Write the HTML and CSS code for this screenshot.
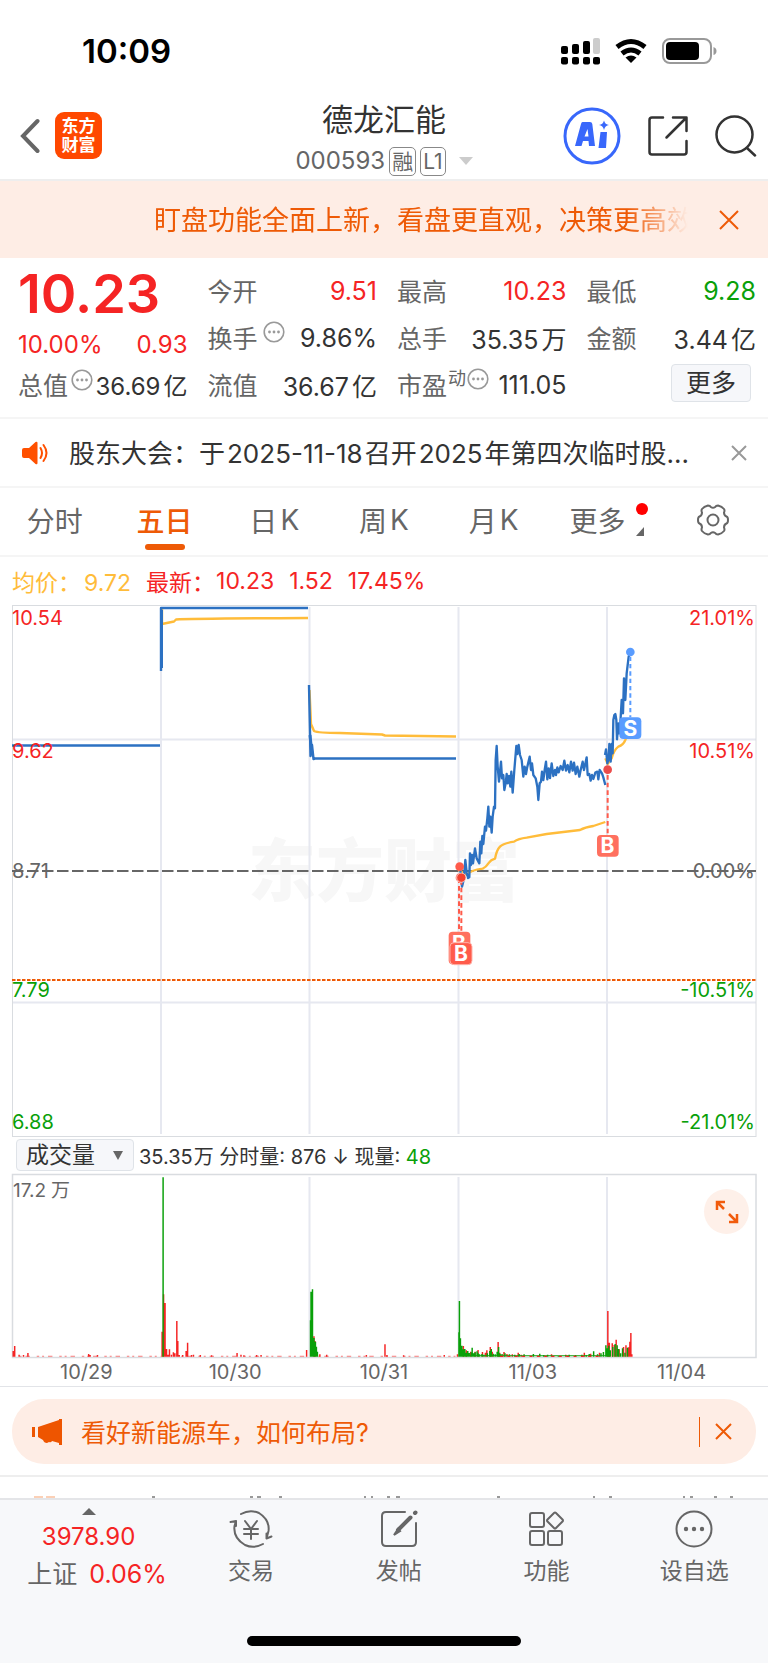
FILE: index.html
```html
<!DOCTYPE html>
<html lang="zh-CN">
<head>
<meta charset="utf-8">
<meta name="viewport" content="width=device-width, initial-scale=1">
<title>德龙汇能 000593</title>
<link rel="stylesheet" href="styles.css">
</head>
<body>
<div class="app">
  <div class="status">
    <span class="clock">10:09</span>
    <svg class="status-icons" width="156" height="28" viewBox="561 37 156 28" aria-hidden="true">
      <rect x="561" y="46" width="7" height="8" rx="2"/><rect x="572" y="44" width="7" height="10" rx="2"/><rect x="583" y="41" width="7" height="13" rx="2"/><rect x="593" y="38" width="7" height="16" rx="2" fill="#ccc"/>
      <rect x="561" y="57" width="7" height="7.500" rx="2"/><rect x="572" y="57" width="7" height="7.500" rx="2"/><rect x="583" y="57" width="7" height="7.500" rx="2"/><rect x="593" y="57" width="7" height="7.500" rx="2"/>
      <path d="M617 47q14-11 28 0M622 53.500q9-7 18 0" fill="none" stroke="#000" stroke-width="5"/>
      <path d="M631 63l-5.500-5.500q5.500-4 11 0z"/>
      <rect x="663" y="39" width="48" height="24" rx="7" fill="none" stroke="#999" stroke-width="2"/>
      <rect x="666" y="42" width="33" height="18" rx="4"/><path d="M713.500 47q3 1 3 4t-3 4z" fill="#999"/>
    </svg>
  </div>

  <header class="header">
    <div class="header-side">
      <button class="icon-btn back" aria-label="返回"><svg width="20" height="36" viewBox="0 0 20 36"><path d="M17.500 3L3 18l14.500 15" fill="none" stroke="#666" stroke-width="4" stroke-linecap="round"/></svg></button>
      <a class="logo" href="#home"><span>东方</span><span>财富</span></a>
    </div>
    <div class="heading">
      <h1>德龙汇能</h1>
      <div class="code"><span>000593</span><span class="tag">融</span><span class="tag">L1</span><svg width="14" height="8" viewBox="0 0 14 8"><path d="M0 0h14L7 8z" fill="#ccc"/></svg></div>
    </div>
    <div class="header-side header-actions">
      <button class="icon-btn" aria-label="AI"><svg width="58" height="58" viewBox="0 0 58 58"><circle cx="29" cy="29" r="27" fill="none" stroke="#3867fb" stroke-width="3"/><path d="M19.500 15h7.500q2 0 2.300 2L32 39h-6l-.5-5h-5.500l-1.500 5h-6.500l6-22q.5-2 1.500-2zM24.500 22l-3 7.500h4z" fill="#3867fb" fill-rule="evenodd"/><path d="M37.500 25h6.500l-1 16h-7.500zM41 13.500q1 4 5 4.500-4 .5-5 5-1-4.500-5-5 4-.5 5-4.500z" fill="#3867fb"/></svg></button>
      <button class="icon-btn" aria-label="分享"><svg width="40" height="40" viewBox="0 0 40 40" fill="none" stroke="#333" stroke-width="2.500" stroke-linecap="round" stroke-linejoin="round"><path d="M15 1.500H4q-2.500 0-2.500 2.500v32q0 2.500 2.500 2.500h32q2.500 0 2.500-2.500V25M25 1.500h13.500V15M38 2L18.500 21.500"/></svg></button>
      <button class="icon-btn" aria-label="搜索"><svg width="42" height="42" viewBox="0 0 42 42" fill="none" stroke="#333" stroke-width="2.500" stroke-linecap="round"><circle cx="19.500" cy="19.500" r="18"/><path d="M32 33l8 7.500"/></svg></button>
    </div>
  </header>

  <section class="banner">
    <p>盯盘功能全面上新，看盘更直观，决策更高效</p>
    <button class="icon-btn" aria-label="关闭"><svg width="20" height="20" viewBox="0 0 20 20"><path d="M1 1l18 18M19 1L1 19" stroke="#ee5a06" stroke-width="2"/></svg></button>
  </section>

  <section class="quote">
    <div class="quote-col">
      <strong class="price">10.23</strong>
      <div class="pair change up"><span>10.00%</span><span>0.93</span></div>
      <div class="pair small"><span class="label">总值</span><svg class="info" viewBox="0 0 22 22"><use href="#dots"/></svg><span>36.69<i class="thin"></i>亿</span></div>
    </div>
    <div class="quote-col">
      <div class="pair"><span class="label">今开</span><span class="up">9.51</span></div>
      <div class="pair"><span class="label with-info">换手<svg class="info" viewBox="0 0 22 22"><use href="#dots"/></svg></span><span>9.86%</span></div>
      <div class="pair"><span class="label">流值</span><span>36.67<i class="thin"></i>亿</span></div>
    </div>
    <div class="quote-col">
      <div class="pair"><span class="label">最高</span><span class="up">10.23</span></div>
      <div class="pair"><span class="label">总手</span><span>35.35<i class="thin"></i>万</span></div>
      <div class="pair"><span class="label with-sup">市盈<small>动</small><svg class="info" viewBox="0 0 22 22"><use href="#dots"/></svg></span><span>111.05</span></div>
    </div>
    <div class="quote-col">
      <div class="pair"><span class="label">最低</span><span class="down">9.28</span></div>
      <div class="pair"><span class="label">金额</span><span>3.44<i class="thin"></i>亿</span></div>
      <button class="more">更多</button>
    </div>
  </section>

  <section class="notice">
    <svg width="26" height="24" viewBox="0 0 26 24"><path d="M2 7h5l6.500-6q2-1 2 1v20q0 2-2 1L7 17H2q-2 0-2-2V9q0-2 2-2z" fill="#ff5000"/><path d="M18.500 7q3 5 0 10M21.500 4q6 8 0 16" fill="none" stroke="#ff5000" stroke-width="2" stroke-linecap="round"/></svg>
    <p>股东大会：于<i class="thin"></i>2025-11-18<i class="thin"></i>召开<i class="thin"></i>2025<i class="thin"></i>年第四次临时股...</p>
    <button class="icon-btn" aria-label="关闭"><svg width="16" height="16" viewBox="0 0 16 16"><path d="M1 1l14 14M15 1L1 15" stroke="#999" stroke-width="2"/></svg></button>
  </section>

  <nav class="tabs">
    <button>分时</button>
    <button class="active">五日</button>
    <button>日<i class="thin"></i>K</button>
    <button>周<i class="thin"></i>K</button>
    <button>月<i class="thin"></i>K</button>
    <button class="tab-more">更多<svg width="14" height="34" viewBox="0 0 14 34"><circle cx="7" cy="6" r="6" fill="#f00"/><path d="M9 24v9H1z" fill="#666"/></svg></button>
    <button aria-label="设置"><svg width="34" height="34" viewBox="0 0 34 34" fill="none" stroke="#666" stroke-width="2" stroke-linejoin="round"><path d="M12 2.500q2 0 2.800 1.500 2.200 1.500 4.400 0Q20 2.500 22 2.500q4 1 6 3.500 1 1.500 0 3.500 0 3 2.500 4 1.500.5 1.500 3.500t-1.500 3.500q-2.500 1-2.500 4 1 2 0 3.500-2 2.500-6 3.500-2 0-2.800-1.500-2.200-1.500-4.400 0Q14 31.500 12 31.500q-4-1-6-3.500-1-1.500 0-3.500 0-3-2.500-4Q2 20 2 17t1.500-3.500Q6 12.500 6 9.500 5 7.500 6 6q2-2.500 6-3.500z"/><circle cx="17" cy="17" r="5.500"/></svg></button>
  </nav>

  <section class="chart">
    <div class="legend"><span class="avg">均价：<i class="thin"></i>9.72</span><span>最新：</span><span>10.23</span><span>1.52</span><span>17.45%</span></div>
    <svg class="price-chart" viewBox="12 605 744 532" role="img" aria-label="五日走势">
      <text x="248" y="896" class="watermark">东方财富</text>
      <path d="M161 607V1134M309.500 607V1134M458.500 607V1134M607 607V1134M12 739.500H756M12 1002.500H756" stroke="#e6e8f0" stroke-width="2" fill="none"/>
      <rect x="12.500" y="605.500" width="743.500" height="531" fill="none" stroke="#d9dce0"/>
      <path d="M12 871H756" stroke="#666" stroke-width="2" stroke-dasharray="11.500 3.500"/>
      <path d="M12 980H756" stroke="#ee5a06" stroke-width="2" stroke-dasharray="3.500 1.500"/>
      <g fill="none" stroke-width="2.400" stroke-linejoin="round">
        <path d="M162 608V624L174 621.500 176 619.500Q190 618.500 308 618M309.500 690L311 724 314 731Q318 733 340 733L382 734.500 385 735.500 456 736.500" stroke="#ffbc3a"/>
        <path d="M12 745.500H160M161 671V608H308M309 685L310.500 756 312 745 313.500 759 315 758.500H456" stroke="#2c71c2"/>
        <path d="M161.500 668V610M310 735l2 20" stroke="#2c71c2" stroke-width="3"/>
      </g>
      <g transform="translate(440 620) scale(.33333)" fill="none" stroke-width="7" stroke-linejoin="round">
        <path d="M56 750L64 755 80 765Q92 750 128 746 138 742 147 728 152 720 165 716 170 690 180 680 190 670 222 665 235 656 260 653L320 642 420 630Q435 622 460 618L496 606M496 415L503 432 515 415Q522 390 535 380 550 375 556 360L571 318" stroke="#ffbc3a"/>
        <path d="M55 750L60 740 66 800 71 780 76 720 80 758 84 774 88 772 90 700 93 735 96 705 99 730 105 685 110 715 118 730 121 665 124 700 127 648 130 672 135 620 138 632 142 595 145 560 148 620 151 590 155 638 158 590 162 560 165 565 167 420 170 378 173 440 177 485 183 425 186 475 190 465 193 510 197 490 200 462 203 490 207 468 211 500 214 455 218 518 223 450 229 378 232 402 236 375 240 405 245 420 250 470 254 440 258 462 262 440 269 410 273 450 276 430 280 465 287 475 292 500 295 540 299 490 303 485 306 455 310 480 314 450 318 425 322 478 326 445 330 474 335 430 340 468 345 450 348 465 352 442 356 457 362 438 368 450 373 422 378 452 383 435 388 457 393 425 398 452 402 428 407 462 412 440 418 470 422 450 428 425 432 450 440 412 443 465 448 462 452 482 456 465 460 477 466 458 472 455 475 478 479 450 486 460 490 472 496 495M495 405L498 388 502 430 506 415 508 372 512 425 515 372 518 400 520 300 523 285 526 282 529 300 531 358 535 310 538 340 541 310 545 240 549 280 552 175 556 240 560 160 566 110 571 97" stroke="#2c71c2"/>
        <g stroke="#ff5b4b" stroke-width="6" stroke-dasharray="14 9"><path d="M57 775V940M64 780V970M503 465V645"/></g>
        <path d="M571 110V292" stroke="#599cff" stroke-width="6" stroke-dasharray="13 9"/>
        <g stroke="none" fill="#ff5b4b"><circle cx="59" cy="740" r="13"/><circle cx="60" cy="773" r="13"/><circle cx="64" cy="773" r="14" fill="#f4412f" stroke="#fff" stroke-width="2"/><circle cx="503" cy="449" r="13" fill="#eb4c4b"/><rect x="26" y="935" width="65" height="98" rx="12" fill="#ff705f"/></g>
      </g>
      <text x="459" y="951" class="mark" text-anchor="middle">B</text>
      <g transform="translate(440 620) scale(.33333)"><rect x="30" y="968" width="66" height="66" rx="12" fill="#ff5b4b" stroke="#ffb4ab" stroke-width="3"/><rect x="471" y="645" width="65" height="65" rx="12" fill="#ff705f"/><circle cx="571" cy="96" r="13" fill="#599cff"/><rect x="538" y="292" width="66" height="65" rx="12" fill="#599cff"/></g>
      <g class="mark" text-anchor="middle"><text x="461" y="961">B</text><text x="607.500" y="853">B</text><text x="630.500" y="736">S</text></g>
      <g class="axis"><text x="12" y="625" class="up">10.54</text><text x="12" y="758" class="up">9.62</text><text x="12" y="878">8.71</text><text x="12" y="997" class="down">7.79</text><text x="12" y="1129" class="down">6.88</text></g>
      <g class="axis" text-anchor="end"><text x="755" y="625" class="up">21.01%</text><text x="755" y="758" class="up">10.51%</text><text x="755" y="878">0.00%</text><text x="755" y="997" class="down">-10.51%</text><text x="755" y="1129" class="down">-21.01%</text></g>
    </svg>

    <div class="volume-bar">
      <label class="picker"><select aria-label="指标"><option>成交量</option></select><svg width="10" height="9" viewBox="0 0 10 9"><path d="M0 0h10L5 9z" fill="#666"/></svg></label>
      <span>35.35<i class="thin"></i>万 分时量: 876 ↓ 现量: <span class="down">48</span></span>
    </div>

    <div class="volume">
      <svg class="volume-chart" viewBox="12 1174 744 184" role="img" aria-label="成交量">
        <rect x="12.500" y="1174.500" width="743.500" height="183" fill="none" stroke="#d9dce0" stroke-width="1.500"/>
        <path d="M309.500 1177V1357M458.500 1177V1357M607 1177V1357" stroke="#e6e8f0" stroke-width="2"/>
        <text x="13" y="1197" class="scale">17.2</text><text x="51" y="1197" class="scale">万</text>
        <g transform="translate(0 1165) scale(.4898 .3333)" fill="none" stroke-width="3">
          <path d="M27 575V558M30 575V543M39 575v-6M48 575v-5M57 575V564M181 575V567M184 575v-5M199 575v-5M331 575V500M334 575V388M337 575V414M340 575V552M343 575v-6M346 575V553M350 575v-6M354 575V562M357 575V565M361 575V468M363 575V528M366 575v-5M373 575v-5M380 575V558M383 575V533M391 575v-5M395 575v-6M409 575v-5M432 575v-4M484 575V564M492 575v-6M498 575v-4M524 575v-5M533 575v-5M626 575V555M641 575V514M643 575V528M653 575v-7M667 575v-6M748 575v-5M786 575V538M790 575v-5M824 575v-4M907 575v-5M934 575v-7M946 575V543M952 575V556M961 575V560M970 575V560M976 575V555M985 575V561M991 575V563M994 575V556M1001 575V546M1005 575V560M1017 575V531M1020 575V563M1029 575V561M1035 575V567M1046 575V568M1058 575V563M1064 575V569M1126 575V568M1155 575V569M1193 575V563M1206 575V566M1224 575V563M1241 575V438M1244 575V533M1250 575V535M1254 575V540M1258 575V524M1264 575V553M1273 575V546M1278 575V541M1283 575V547M1286 575V530M1288 575V504M1290 575V568" stroke="#f52424"/>
          <path d="M40 574H330M370 574H625M650 574H935" stroke="#f52424" stroke-width="3" stroke-dasharray="4 8 9 14 5 6" opacity=".6"/>
          <path d="M333 575V37M634 575V466M635 575V380M638 575V373M641 575V519M644 575V530M646 575V545M648 575V560M937 575V502M938 575V408M940 575V520M943 575V542M946 575V553M949 575V552M952 575V563M955 575V558M958 575V564M962 575V562M964 575V548M967 575V565M970 575V562M974 575V559M976 575V565M979 575V568M984 575V567M988 575V569M995 575V565M1000 575V558M1003 575V552M1007 575V566M1011 575V568M1015 575V560M1018 575V546M1021 575V566M1025 575V567M1031 575V565M1040 575V568M1051 575V569M1060 575V567M1070 575V568M1089 575V567M1102 575V566M1110 575V570M1118 575V569M1129 575V571M1140 575V571M1162 575V569M1175 575V570M1188 575V569M1197 575V570M1203 575V567M1212 575V559M1220 575V568M1227 575V565M1232 575V561M1237 575V541M1240 575V550M1243 575V542M1246 575V556M1251 575V546M1256 575V537M1260 575V541M1263 575V552M1267 575V565M1271 575V550M1276 575V563M1281 575V548M940 572H1240" stroke="#09a009"/>
          <path d="M1021 574H1230" stroke="#f52424" stroke-dasharray="6 9" stroke-width="4"/>
        </g>
      </svg>
      <button class="expand" aria-label="展开"><svg width="24" height="24" viewBox="0 0 24 24" fill="none" stroke="#f15b0c" stroke-width="2.500"><path d="M2 10V2h8M2.500 2.500L9 9M22 14v8h-8M21.500 21.500L14 14"/></svg></button>
    </div>
    <div class="dates"><span>10/29</span><span>10/30</span><span>10/31</span><span>11/03</span><span>11/04</span></div>
  </section>

  <section class="promo">
    <a class="promo-pill" href="#ask">
      <svg width="30" height="28" viewBox="0 0 30 28" fill="#ee5500"><path d="M0 9h3v10H0zM6 9L27 2V1h3v26h-3v-2l-7-2q-1 2-3 1l-2 1q-3 0-4-3l-5-3z"/></svg>
      <span>看好新能源车，如何布局?</span>
    </a>
    <button class="icon-btn promo-close" aria-label="关闭"><svg width="17" height="17" viewBox="0 0 17 17"><path d="M1 1l15 15M16 1L1 16" stroke="#ee5a06" stroke-width="2"/></svg></button>
  </section>

  <div class="peek">
    <svg viewBox="0 0 768 2" aria-hidden="true"><path d="M34 1h9M46 1h9" stroke="#fbd0b6" stroke-width="2"/><path d="M152 1h3M250 1h3M257 1h4M279 1h3M364 1h2M371 1h2M387 1h3M396 1h4M497 1h3M593 1h2M609 1h3M683 1h2M690 1h3M714 1h3M730 1h3" stroke="#999" stroke-width="2"/></svg>
  </div>

  <footer class="dock">
    <nav class="dock-items">
      <a class="index" href="#index">
        <svg width="14" height="7" viewBox="0 0 14 7"><path d="M0 7h14L7 0z" fill="#666"/></svg>
        <span class="up">3978.90</span>
        <span class="index-row"><span>上证</span><span class="up">0.06%</span></span>
      </a>
      <a href="#trade"><svg width="44" height="40" viewBox="0 0 44 40" fill="none" stroke="#666" stroke-width="2" stroke-linecap="round" stroke-linejoin="round"><path d="M12 5q9-5 18-1 11 7 9.500 18l-2 7.500M34 35q-9 5-18 1Q4 29 5.500 17L7 12M1.500 13L7 12v5M37.500 29.500v-5M37.500 29.500l5-2M16 12l6 8 6-8M22 20v10M15 20h14M15 25h14"/></svg><span>交易</span></a>
      <a href="#post"><svg width="40" height="40" viewBox="0 0 40 40" fill="none" stroke="#666" stroke-width="2" stroke-linecap="round"><path d="M26 3H7Q3 3 3 7v26q0 4 4 4h26q4 0 4-4V14"/><path d="M19 21L31.500 8.500M36 4l.5-.5" stroke-width="4"/><path d="M15 26l4-6 2 2z" fill="#666"/></svg><span>发帖</span></a>
      <a href="#features"><svg width="40" height="40" viewBox="0 0 40 40" fill="none" stroke="#666" stroke-width="2" stroke-linejoin="round"><rect x="4" y="4" width="14" height="14" rx="2"/><rect x="4" y="22" width="14" height="14" rx="2"/><rect x="22" y="22" width="14" height="14" rx="2"/><path d="M28 4q1-1 2 0l6.500 6.500q1 1 0 2L30 19q-1 1-2 0l-6.500-6.500q-1-1 0-2z"/></svg><span>功能</span></a>
      <a href="#watch"><svg width="40" height="40" viewBox="0 0 40 40"><circle cx="20" cy="20" r="17.500" fill="none" stroke="#666" stroke-width="2"/><g fill="#666"><circle cx="12" cy="20" r="2.200"/><circle cx="20" cy="20" r="2.200"/><circle cx="28" cy="20" r="2.200"/></g></svg><span>设自选</span></a>
    </nav>
    <div class="home-indicator"></div>
  </footer>
</div>
<svg width="0" height="0" class="defs"><symbol id="dots" viewBox="0 0 22 22"><circle cx="11" cy="11" r="9.800" fill="none" stroke="#999" stroke-width="1.600"/><circle cx="6.500" cy="11" r="1.400" fill="#999"/><circle cx="11" cy="11" r="1.400" fill="#999"/><circle cx="15.500" cy="11" r="1.400" fill="#999"/></symbol></svg>
</body>
</html>
```
FILE: styles.css
```css
* { box-sizing: border-box; }
body {
  margin: 0;
  background: #fff;
  color: #333;
  font-family: Inter, "Noto Sans CJK SC", sans-serif;
  font-size: 25px;
}
h1, p { margin: 0; font-weight: 400; }
a { color: inherit; text-decoration: none; }
button { border: 0; padding: 0; background: none; color: inherit; font: inherit; }
svg { display: block; flex: none; }
.defs { position: absolute; top: 0; }
.up { color: #f52424; fill: #f52424; }
.down { color: #09a009; fill: #09a009; }
.thin { display: inline-block; width: 3px; }
.icon-btn { display: flex; }

.status {
  display: flex;
  align-items: center;
  justify-content: space-between;
  height: 92px;
  padding: 10px 51px 0 82px;
}
.clock { color: #000; font-size: 33px; font-weight: 600; }

.header {
  display: grid;
  grid-template-columns: 1fr auto 1fr;
  align-items: center;
  height: 89px;
  padding: 0 11px;
  border-bottom: 2px solid #eee;
}
.header-side { display: flex; align-items: center; gap: 15px; }
.header-actions { justify-content: flex-end; gap: 27px; }
.back { padding-left: 9px; }
.logo {
  display: flex;
  flex-direction: column;
  justify-content: center;
  align-items: center;
  width: 47px;
  height: 47px;
  border-radius: 9px;
  background: #ff4800;
  color: #fff;
  font-size: 17px;
  font-weight: 700;
  line-height: 19px;
}
.heading { padding-top: 4px; text-align: center; }
.heading h1 { margin-bottom: 3px; font-size: 31px; line-height: 44px; }
.code {
  display: flex;
  align-items: center;
  gap: 4px;
  color: #666;
  font-size: 24px;
  line-height: 32px;
}
.code svg { margin-left: 9px; }
.code .tag {
  padding: 0 2px;
  border: 1px solid #888;
  border-radius: 5px;
  font-size: 21px;
  line-height: 27px;
}

.banner {
  display: flex;
  align-items: center;
  justify-content: space-between;
  height: 77px;
  padding: 0 29px 0 154px;
  background: #feede5;
  color: #ee5a06;
  font-size: 27px;
}
.banner p {
  flex: 1;
  overflow: hidden;
  margin-right: 31px;
  padding-bottom: 2px;
  white-space: nowrap;
  -webkit-mask-image: linear-gradient(to left, transparent, #000 60px);
  mask-image: linear-gradient(to left, transparent, #000 60px);
}

.quote {
  display: grid;
  grid-template-columns: repeat(4, 1fr);
  gap: 20px;
  padding: 9px 12px 9px 18px;
  border-bottom: 2px solid #f5f5f5;
  white-space: nowrap;
}
.pair {
  display: flex;
  align-items: center;
  justify-content: space-between;
  height: 47px;
}
.label { padding-bottom: 2px; color: #666; }
.change, .small { font-size: 24px; }
.small .label { font-size: 25px; }
.price {
  display: block;
  height: 54px;
  color: #f52424;
  font-size: 54px;
  font-weight: 600;
  line-height: 54px;
}
.change { height: 40px; align-items: flex-end; line-height: 32px; }
.info { width: 22px; height: 22px; margin-bottom: 10px; }
.with-info, .with-sup { display: flex; align-items: center; gap: 5px; }
.with-sup { gap: 1px; }
.with-sup small { margin-bottom: 14px; font-size: 18px; }
.more {
  display: block;
  width: 80px;
  height: 38px;
  margin: 3px 5px 0 auto;
  border: 1px solid #dfe3e8;
  border-radius: 4px;
  background: #f6f7fa;
  line-height: 34px;
}

.notice {
  display: flex;
  align-items: center;
  height: 69px;
  padding: 0 21px 0 22px;
  border-bottom: 2px solid #f5f5f5;
  font-size: 26px;
}
.notice p { flex: 1; margin-left: 21px; padding-bottom: 3px; overflow: hidden; white-space: nowrap; }
.notice .thin { width: 2px; }

.tabs {
  display: grid;
  grid-template-columns: repeat(7, 1fr);
  height: 69px;
  border-bottom: 2px solid #f5f5f5;
  color: #666;
  font-size: 28px;
}
.tabs button { display: flex; align-items: center; justify-content: center; position: relative; padding-bottom: 3px; }
.tabs .active { color: #ee5a06; font-weight: 500; }
.tabs .active::after {
  content: "";
  position: absolute;
  bottom: 5px;
  width: 40px;
  height: 6px;
  border-radius: 3px;
  background: #ee5a06;
}
.tabs .tab-more { gap: 10px; padding-left: 12px; }

.chart { padding: 0 12px; border-bottom: 1px solid #e2e4e8; }
.legend {
  display: flex;
  align-items: center;
  gap: 15px;
  height: 48px;
  color: #f52424;
  font-size: 23px;
}
.legend .avg { color: #ffbc3a; }
.legend span:nth-child(2) { margin-right: -14px; }
.price-chart, .volume-chart { width: 100%; height: auto; overflow: visible; }
.watermark { fill: #f7f7f7; font-size: 68px; font-weight: 900; }
.axis { fill: #666; font-size: 20px; }
.scale { fill: #666; font-size: 19px; }
.mark { fill: #fff; font-size: 21px; font-weight: 700; }

.volume-bar {
  display: flex;
  align-items: center;
  gap: 5px;
  height: 37px;
  padding: 0 0 1px 4px;
  font-size: 20px;
}
.volume-bar .thin { width: 1px; }
.picker {
  display: flex;
  align-items: center;
  width: 118px;
  height: 32px;
  padding: 0 10px 0 9px;
  border: 1px solid #dfe3e8;
  border-radius: 4px;
  background: #f6f7fa;
}
.picker select {
  flex: 1;
  min-width: 0;
  padding: 0;
  border: 0;
  appearance: none;
  background: none;
  color: #333;
  font: inherit;
  font-size: 23px;
  line-height: 28px;
}
.volume { position: relative; }
.expand {
  display: flex;
  align-items: center;
  justify-content: center;
  position: absolute;
  top: 15px;
  right: 7px;
  width: 45px;
  height: 45px;
  border-radius: 50%;
  background: #fef0e9;
}
.dates {
  display: grid;
  grid-template-columns: repeat(5, 1fr);
  padding-top: 1px;
  color: #666;
  font-size: 20px;
  line-height: 27px;
  text-align: center;
}

.promo {
  display: flex;
  align-items: center;
  height: 65px;
  margin: 12px 12px 11px;
  padding: 0 24px 0 20px;
  border-radius: 32px;
  background: #feede5;
  color: #ee5a06;
}
.promo-pill { display: flex; flex: 1; align-items: center; gap: 19px; }
.promo-pill span { padding-bottom: 2px; }
.promo-close { align-items: center; height: 30px; padding-left: 15px; border-left: 1px solid #ee5a06; }

.peek { display: flex; align-items: flex-end; height: 23px; border-top: 2px solid #eee; }
.peek svg { width: 100%; }

.dock { height: 165px; border-top: 2px solid #e4e5e8; background: #f7f8fa; color: #666; }
.dock-items { display: grid; grid-template-columns: 6fr 5fr 5fr 5fr 5fr; height: 136px; }
.dock-items a {
  display: flex;
  flex-direction: column;
  align-items: center;
  gap: 5px;
  padding-top: 9px;
  font-size: 23px;
  line-height: 34px;
}
.dock-items .index { gap: 5px; padding-top: 8px; font-size: 24px; }
.index-row { display: flex; gap: 12px; padding-left: 17px; font-size: 25px; line-height: 30px; white-space: nowrap; }
.home-indicator { width: 274px; height: 10px; margin: 0 auto; border-radius: 5px; background: #000; }
```
